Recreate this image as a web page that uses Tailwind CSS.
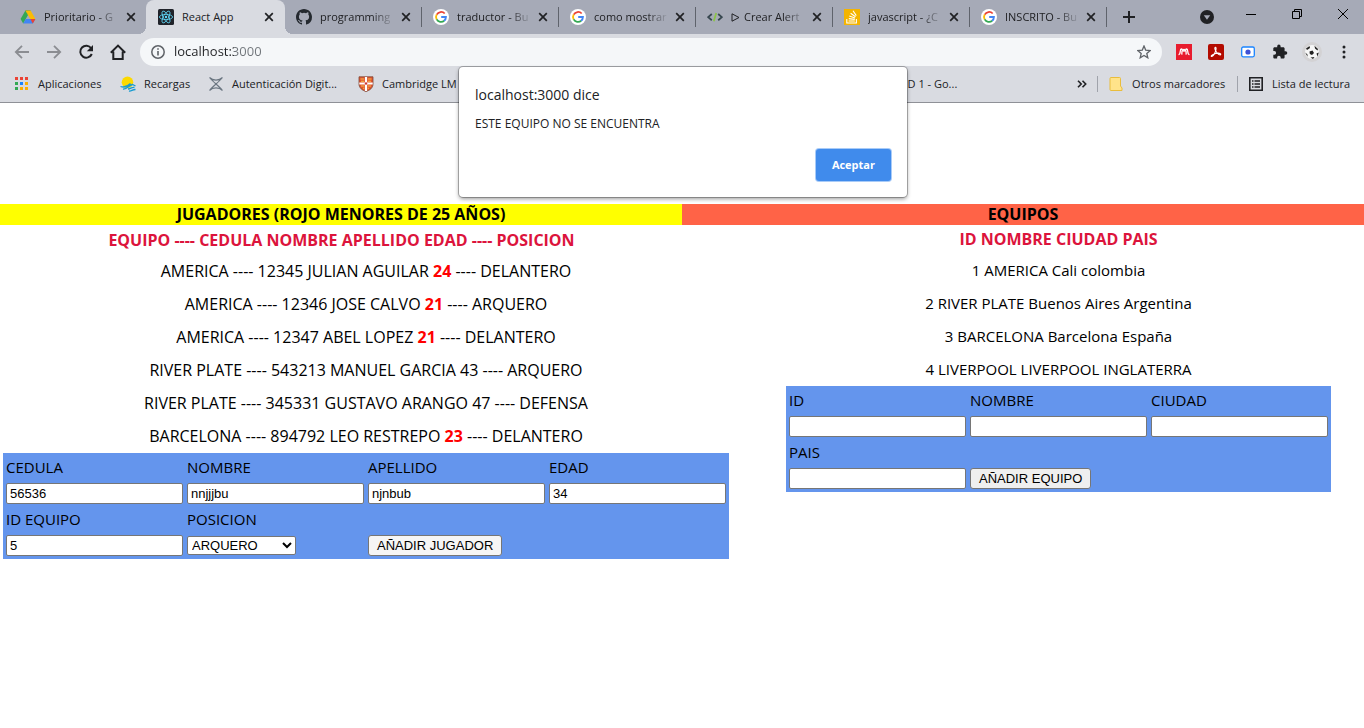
<!DOCTYPE html>
<html lang="es">
<head>
<meta charset="utf-8">
<title>React App</title>
<script src="https://cdn.jsdelivr.net/npm/@tailwindcss/browser@4"></script>
</head>
<body class="min-h-screen bg-white font-['Open_Sans','Noto_Sans',sans-serif] text-[15px] text-black">
<svg class="hidden" aria-hidden="true">
  <symbol id="google" viewBox="0 0 16 16">
    <circle cx="8" cy="8" r="8" fill="#fff"/>
    <path d="M3.7 5.6A5 5 0 0 1 11.7 4.5" fill="none" stroke="#ea4335" stroke-width="1.8"/>
    <path d="M3.7 5.5A5 5 0 0 0 3.7 10.5" fill="none" stroke="#fbbc05" stroke-width="1.8"/>
    <path d="M3.7 10.4A5 5 0 0 0 11.2 11.8" fill="none" stroke="#34a853" stroke-width="1.8"/>
    <path d="M8.2 8H12.9A5 5 0 0 1 11.1 11.8" fill="none" stroke="#4285f4" stroke-width="1.9"/>
  </symbol>
  <symbol id="close" viewBox="0 0 10 10"><path d="M1.2 1.2L8.8 8.8M8.8 1.2L1.2 8.8" stroke="#202124" stroke-width="1.7"/></symbol>
</svg>

<header class="relative text-[#202124]">
  <div class="flex h-[34px] bg-[#a6aab7] pl-[9px] text-[11px]" role="tablist">
    <div class="flex w-[137px] shrink-0 items-center pl-[11px]">
      <button role="tab" class="flex items-center gap-2">
        <svg class="size-4" viewBox="0 0 16 16"><path d="M5.4 1.5H10.6L8 6z" fill="#188038"/><path d="M5.4 1.5L.6 10 3.2 14.4 8 6z" fill="#34a853"/><path d="M10.6 1.5L15.4 10H10.3L5.4 1.5z" fill="#fbbc04"/><path d="M3.2 14.4L5.7 10H15.4L12.8 14.4z" fill="#4285f4"/><path d="M10.3 10H15.4L12.8 14.4z" fill="#ea4335"/></svg>
        <span class="w-[76px] overflow-hidden text-left whitespace-nowrap [mask-image:linear-gradient(90deg,#000_70%,transparent)]">Prioritario - G</span>
      </button>
      <button class="ml-1.5" aria-label="Cerrar"><svg class="size-2.5"><use href="#close"/></svg></button>
    </div>
    <div class="relative flex w-[139px] shrink-0 items-center rounded-t-lg bg-[#d9dbe1] pl-3">
      <span class="absolute bottom-0 -left-2 size-2 bg-[radial-gradient(circle_at_0_0,transparent_8px,#d9dbe1_8px)]"></span>
      <span class="absolute -right-2 bottom-0 size-2 bg-[radial-gradient(circle_at_100%_0,transparent_8px,#d9dbe1_8px)]"></span>
      <button role="tab" aria-selected="true" class="flex items-center gap-2">
        <svg class="size-4" viewBox="0 0 16 16"><rect width="16" height="16" rx="1.5" fill="#20232a"/><g fill="none" stroke="#61dafb" stroke-width=".8"><ellipse cx="8" cy="8" rx="6.6" ry="2.6"/><ellipse cx="8" cy="8" rx="6.6" ry="2.6" transform="rotate(60 8 8)"/><ellipse cx="8" cy="8" rx="6.6" ry="2.6" transform="rotate(120 8 8)"/></g><circle cx="8" cy="8" r="1.2" fill="#61dafb"/></svg>
        <span class="w-[76px] overflow-hidden text-left whitespace-nowrap">React App</span>
      </button>
      <button class="ml-1.5" aria-label="Cerrar"><svg class="size-2.5"><use href="#close"/></svg></button>
    </div>
    <div class="relative flex w-[137px] shrink-0 items-center pl-[11px]">
      <button role="tab" class="flex items-center gap-2">
        <svg class="size-4" viewBox="0 0 16 16"><path fill="#24292f" d="M8 0C3.58 0 0 3.58 0 8c0 3.54 2.29 6.53 5.47 7.59.4.07.55-.17.55-.38 0-.19-.01-.82-.01-1.49-2.01.37-2.53-.49-2.69-.94-.09-.23-.48-.94-.82-1.13-.28-.15-.68-.52-.01-.53.63-.01 1.08.58 1.23.82.72 1.21 1.87.87 2.33.66.07-.52.28-.87.51-1.07-1.78-.2-3.64-.89-3.64-3.95 0-.87.31-1.59.82-2.15-.08-.2-.36-1.02.08-2.12 0 0 .67-.21 2.2.82a7.6 7.6 0 0 1 4 0c1.53-1.04 2.2-.82 2.2-.82.44 1.1.16 1.92.08 2.12.51.56.82 1.27.82 2.15 0 3.07-1.87 3.75-3.65 3.95.29.25.54.73.54 1.48 0 1.07-.01 1.93-.01 2.2 0 .21.15.46.55.38A8 8 0 0 0 16 8c0-4.42-3.58-8-8-8z"/></svg>
        <span class="w-[75px] overflow-hidden text-left whitespace-nowrap [mask-image:linear-gradient(90deg,#000_70%,transparent)]">programming</span>
      </button>
      <button class="ml-1.5" aria-label="Cerrar"><svg class="size-2.5"><use href="#close"/></svg></button>
      <span class="absolute top-[7px] right-0 h-5 w-px bg-[#5f636c]"></span>
    </div>
    <div class="relative flex w-[137px] shrink-0 items-center pl-[11px]">
      <button role="tab" class="flex items-center gap-2"><svg class="size-4"><use href="#google"/></svg>
        <span class="w-[75px] overflow-hidden text-left whitespace-nowrap [mask-image:linear-gradient(90deg,#000_70%,transparent)]">traductor - Bu</span>
      </button>
      <button class="ml-1.5" aria-label="Cerrar"><svg class="size-2.5"><use href="#close"/></svg></button>
      <span class="absolute top-[7px] right-0 h-5 w-px bg-[#5f636c]"></span>
    </div>
    <div class="relative flex w-[137px] shrink-0 items-center pl-[11px]">
      <button role="tab" class="flex items-center gap-2"><svg class="size-4"><use href="#google"/></svg>
        <span class="w-[75px] overflow-hidden text-left whitespace-nowrap [mask-image:linear-gradient(90deg,#000_70%,transparent)]">como mostrar</span>
      </button>
      <button class="ml-1.5" aria-label="Cerrar"><svg class="size-2.5"><use href="#close"/></svg></button>
      <span class="absolute top-[7px] right-0 h-5 w-px bg-[#5f636c]"></span>
    </div>
    <div class="relative flex w-[137px] shrink-0 items-center pl-[11px]">
      <button role="tab" class="flex items-center gap-2">
        <svg class="size-4" viewBox="0 0 16 16" fill="none" stroke-width="1.8"><path d="M4.8 5L1.2 8.1 4.8 11.2M11.2 5L14.8 8.1 11.2 11.2" stroke="#37474f"/><path d="M9.2 4L6.8 12.2" stroke="#8bc34a"/></svg>
        <span class="w-[75px] overflow-hidden text-left whitespace-nowrap [mask-image:linear-gradient(90deg,#000_70%,transparent)]"><svg class="mr-1 inline size-[9px]" viewBox="0 0 9 9"><path d="M1 .8L8 4.5 1 8.2z" fill="none" stroke="#202124"/></svg>Crear Alert</span>
      </button>
      <button class="ml-1.5" aria-label="Cerrar"><svg class="size-2.5"><use href="#close"/></svg></button>
      <span class="absolute top-[7px] right-0 h-5 w-px bg-[#5f636c]"></span>
    </div>
    <div class="relative flex w-[137px] shrink-0 items-center pl-[11px]">
      <button role="tab" class="flex items-center gap-2">
        <svg class="size-4" viewBox="0 0 16 16"><path fill="#f4b400" d="M0 0h16v16H0z"/><path d="M2.8 10V14H12.4V10M4.6 12H10.8M4.8 9.6L10.8 10.4M5.3 7L11 9M6.6 4.2L11.5 7.7M9 1.8L12.3 6.6" fill="none" stroke="#fff" stroke-width="1.1"/></svg>
        <span class="w-[75px] overflow-hidden text-left whitespace-nowrap [mask-image:linear-gradient(90deg,#000_70%,transparent)]">javascript - ¿C</span>
      </button>
      <button class="ml-1.5" aria-label="Cerrar"><svg class="size-2.5"><use href="#close"/></svg></button>
      <span class="absolute top-[7px] right-0 h-5 w-px bg-[#5f636c]"></span>
    </div>
    <div class="relative flex w-[137px] shrink-0 items-center pl-[11px]">
      <button role="tab" class="flex items-center gap-2"><svg class="size-4"><use href="#google"/></svg>
        <span class="w-[75px] overflow-hidden text-left whitespace-nowrap [mask-image:linear-gradient(90deg,#000_70%,transparent)]">INSCRITO - Bu</span>
      </button>
      <button class="ml-1.5" aria-label="Cerrar"><svg class="size-2.5"><use href="#close"/></svg></button>
      <span class="absolute top-[7px] right-0 h-5 w-px bg-[#5f636c]"></span>
    </div>
    <button class="ml-4 shrink-0" aria-label="Nueva pestaña"><svg class="size-3" viewBox="0 0 12 12"><path d="M6 0V12M0 6H12" stroke="#202124" stroke-width="2"/></svg></button>
    <div class="ml-auto flex shrink-0 items-center">
      <button class="mr-[29px]" aria-label="Buscar pestañas"><svg class="size-3.5" viewBox="0 0 14 14"><circle cx="7" cy="7" r="7" fill="#202124"/><path d="M3.8 5.3H10.2L7 9.8z" fill="#a6aab7"/></svg></button>
      <button class="flex h-7 w-[46px] items-center self-start pl-[3px]" aria-label="Minimizar"><svg class="size-2.5" viewBox="0 0 10 10"><path d="M0 5.5H10" stroke="#000"/></svg></button>
      <button class="flex h-7 w-[46px] items-center self-start pl-[3px]" aria-label="Restaurar"><svg class="size-2.5" viewBox="0 0 10 10" fill="none" stroke="#000"><path d="M.5 2.5H7.5V9.5H.5zM2.5 2.5V.5H9.5V7.5H7.5"/></svg></button>
      <button class="flex h-7 w-[29px] items-center self-start pl-[3px]" aria-label="Cerrar ventana"><svg class="size-2.5" viewBox="0 0 10 10"><path d="M0 0L10 10M10 0L0 10" stroke="#000"/></svg></button>
    </div>
  </div>

  <div class="flex h-9 items-center bg-[#d9dbe1] pr-1 pl-1.5">
    <button class="flex w-8 justify-center" aria-label="Atrás"><svg class="size-4" viewBox="0 0 16 16" fill="none" stroke="#8b8d92" stroke-width="1.8"><path d="M15 8H2M8 1.800L1.800 8 8 14.200"/></svg></button>
    <button class="flex w-8 justify-center" aria-label="Adelante"><svg class="size-4" viewBox="0 0 16 16" fill="none" stroke="#8b8d92" stroke-width="1.8"><path d="M1 8H14M8 1.800L14.200 8 8 14.200"/></svg></button>
    <button class="flex w-8 justify-center" aria-label="Recargar"><svg class="size-4" viewBox="0 0 16 16"><path d="M13.2 4.2A6 6 0 1 0 13.8 10" fill="none" stroke="#202124" stroke-width="2"/><path d="M15 1V7.2H8.8z" fill="#202124"/></svg></button>
    <button class="flex w-8 justify-center" aria-label="Inicio"><svg class="size-4" viewBox="0 0 16 16"><path d="M.8 8.7L8 1.6 15.2 8.7M3.3 7.5V15H12.7V7.5" fill="none" stroke="#202124" stroke-width="2"/></svg></button>
    <div class="ml-1.5 flex h-7 flex-1 items-center rounded-full bg-[#f5f7f9] px-[11px]">
      <svg class="size-3.5" viewBox="0 0 14 14"><circle cx="7" cy="7" r="6.2" fill="none" stroke="#5f6368" stroke-width="1.5"/><path d="M7 6V10.5M7 3.3V4.8" stroke="#5f6368" stroke-width="1.6"/></svg>
      <input aria-label="Dirección" value="localhost:3000" class="ml-[9px] min-w-0 flex-1 bg-[linear-gradient(90deg,#202124_60px,#70757a_60px)] bg-clip-text text-[13px] text-transparent outline-none">
      <button aria-label="Añadir a marcadores"><svg class="size-3.5" viewBox="0 0 14 14"><path d="M7 1L8.7 5.1 13.2 5.5 9.8 8.4 10.8 12.8 7 10.5 3.2 12.8 4.2 8.4.8 5.5 5.3 5.1z" fill="none" stroke="#5f6368" stroke-width="1.3"/></svg></button>
    </div>
    <div class="ml-1.5 flex items-center">
      <button class="flex w-8 justify-center" aria-label="Mendeley"><svg class="size-4" viewBox="0 0 16 16"><path fill="#e81c2e" d="M0 0h16v16H0z"/><path d="M2.500 10.600C5.200 10.600 3.400 5 5.300 5 6.600 5 6.600 7.200 8 7.200S9.400 5 10.700 5C12.600 5 10.800 10.600 13.500 10.600M6 6.500L5.800 10.600M10 6.500L10.200 10.600" fill="none" stroke="#fff" stroke-width="1.300"/><circle cx="8" cy="5.800" r="1.100" fill="#fff"/></svg></button>
      <button class="flex w-8 justify-center" aria-label="Adobe Acrobat"><svg class="size-4" viewBox="0 0 16 16"><rect width="16" height="16" rx="2" fill="#b30b00"/><path d="M7.3 3.2C8.6 3 8.2 6.2 6.8 9 5.7 11.4 4 13 3.3 12.3S6 9.8 9 9.3 13 9.7 12.7 10.6 9.8 10.3 8.2 7.7 6.5 3.4 7.3 3.2z" fill="none" stroke="#fff" stroke-width="1.1"/></svg></button>
      <button class="flex w-8 justify-center" aria-label="Captura"><svg class="size-4" viewBox="0 0 16 16"><rect x="1.7" y="3" width="12.6" height="9.8" rx="1.5" fill="#fff" stroke="#1a84ff" stroke-width="1.3"/><circle cx="8" cy="8" r="2.6" fill="#3f51d5"/></svg></button>
      <button class="flex w-8 justify-center" aria-label="Extensiones"><svg class="size-4" viewBox="0 0 16 16"><path fill="#202124" d="M13.6 7.3h-1V4.6c0-.7-.6-1.3-1.3-1.3H8.6v-1a1.7 1.7 0 0 0-3.4 0v1H2.600c-.7 0-1.3.6-1.3 1.3v2.500h1a1.800 1.800 0 0 1 0 3.600h-1v2.500c0 .8.6 1.400 1.300 1.400h2.500v-1a1.800 1.800 0 0 1 3.600 0v1h2.600c.7 0 1.300-.6 1.300-1.400v-2.500h1a1.700 1.700 0 0 0 0-3.400z"/></svg></button>
      <button class="flex w-8 justify-center" aria-label="Perfil"><svg class="size-5" viewBox="0 0 20 20"><circle cx="10" cy="10" r="10" fill="#d3d2d4"/><circle cx="10" cy="10" r="7" fill="#f7f7f7"/><path d="M4 6.500L7.500 4 8 6 5 8zM12.500 3.800L16 7 15.500 8.500 13 6.500zM7.500 9.500L10.500 8.500 12 11 10 13 7.800 12zM3.200 10.500L5.500 12.500 5.500 14.800zM14.500 11.500L16.800 10.500 15.500 14.500zM8.500 15.500L12.500 15 11 17z" fill="#222"/></svg></button>
      <button class="flex w-8 justify-center" aria-label="Menú"><svg class="size-4" viewBox="0 0 16 16" fill="#202124"><circle cx="8" cy="3" r="1.5"/><circle cx="8" cy="8" r="1.5"/><circle cx="8" cy="13" r="1.5"/></svg></button>
    </div>
  </div>

  <nav class="flex h-[33px] items-center border-b border-[#8f9197] bg-[#d9dbe1] pr-3.5 pb-1 pl-3.5 text-[11px] whitespace-nowrap" aria-label="Marcadores">
    <a href="#" class="flex w-[106px] shrink-0 items-center gap-2.5"><svg class="size-3.5" viewBox="0 0 14 14"><path fill="#ea4335" d="M1 0h3v3H1zM6 0h3v3H6zM11 0h3v3h-3z"/><path fill="#34a853" d="M1 5h3v3H1zM1 10h3v3H1z"/><path fill="#1a84ff" d="M6 5h3v3H6z"/><path fill="#fbaf04" d="M11 5h3v3h-3zM6 10h3v3H6zM11 10h3v3h-3z"/></svg>Aplicaciones</a>
    <a href="#" class="flex w-[88px] shrink-0 items-center gap-2"><svg class="size-4" viewBox="0 0 16 16"><circle cx="7.500" cy="6.300" r="5.800" fill="#fcd900"/><path d="M.5 10.500C5 12 8 10 10.500 7.500M3 13C7.500 13.500 8.500 9.500 12.500 8.500L15.500 10M8 13C11 13 11 11 14.500 11.500M9 15C11.500 15.500 12 13.500 15.500 13.500" fill="none" stroke="#189bd0" stroke-width="1.300"/></svg>Recargas</a>
    <a href="#" class="flex w-[150px] shrink-0 items-center gap-2"><svg class="size-4" viewBox="0 0 16 16" fill="none" stroke="#6b7681"><path d="M1.500 1.500C5 6 11 10 14.500 14.500M14.500 1.500C11 6 5 10 1.500 14.500M1.500 1.500C5 5 11 5 14.500 1.500M1.500 14.500C5 11 11 11 14.500 14.500" stroke-width="1.100"/></svg>Autenticación Digit...</a>
    <a href="#" class="flex shrink-0 items-center gap-2"><svg class="size-4" viewBox="0 0 16 16"><path d="M1 .8H15V8C15 12 11.500 14.500 8 15.500 4.500 14.500 1 12 1 8z" fill="#e0532e" stroke="#7a4a3a" stroke-width=".8"/><path d="M8 1V15M1.300 7.500H14.700" stroke="#fff" stroke-width="2.200"/><path d="M2.500 3H6M3 5.300H6M10 3H13.500M10 5.300H13M3 10H6.300M5 12.300H6.300M9.700 10H13M9.700 12.300H11" stroke="#f5c04a" stroke-width="1.100"/><circle cx="8" cy="7.500" r="1.200" fill="#c33"/></svg>Cambridge LM</a>
    <a href="#" class="mr-auto ml-[451px] shrink-0">D 1 - Go...</a>
    <button class="mr-2.5" aria-label="Más marcadores"><svg class="size-2.5" viewBox="0 0 10 10"><path d="M1 1.800L4.200 5 1 8.200M5.500 1.800L8.700 5 5.500 8.200" fill="none" stroke="#202124" stroke-width="1.600"/></svg></button>
    <span class="h-4 w-px bg-[#a0a3ab]"></span>
    <a href="#" class="ml-2.5 flex w-[129px] items-center gap-2"><svg class="size-4" viewBox="0 0 16 16"><path d="M2 2.500Q2 1.500 3 1.500H11.500Q12.500 1.500 12.500 2.500V10L14 12V14.500H3Q2 14.500 2 13.500z" fill="#ffe38a" stroke="#e9bd3d"/></svg>Otros marcadores</a>
    <span class="h-4 w-px bg-[#a0a3ab]"></span>
    <a href="#" class="ml-2.5 flex items-center gap-2"><svg class="size-4" viewBox="0 0 16 16" fill="none" stroke="#202124"><path d="M1.800 1.800H14.200V14.200H1.800z" stroke-width="1.600"/><path d="M6.500 5H12M6.500 8H12M6.500 11H12M4 5H5.500M4 8H5.500M4 11H5.500" stroke-width="1.300"/></svg>Lista de lectura</a>
  </nav>

  <div role="dialog" aria-labelledby="dlg-title" class="absolute top-[67px] left-1/2 z-10 -ml-[223px] flex h-[130px] w-[448px] flex-col rounded bg-white p-4 shadow-[0_0_0_1px_rgba(0,0,0,0.25),0_2px_4px_rgba(0,0,0,0.4)]">
    <h1 id="dlg-title" class="text-sm leading-6">localhost:3000 dice</h1>
    <p class="mt-[7px] text-xs leading-5">ESTE EQUIPO NO SE ENCUENTRA</p>
    <button class="mt-auto self-end rounded-[3px] bg-[#408bec] px-4 text-[11px] leading-8 font-bold text-white ring-1 ring-[#a8cbf8]">Aceptar</button>
  </div>
</header>

<main class="pt-[101px] text-center">
  <div class="grid grid-cols-2 text-base leading-[21px] font-bold">
    <h2 class="bg-[#ffff00]">JUGADORES (ROJO MENORES DE 25 AÑOS)</h2>
    <h2 class="bg-[#ff6347]">EQUIPOS</h2>
  </div>
  <div class="flex items-start">
    <section class="w-[732px] shrink-0">
      <h3 class="w-[683px] text-base leading-[30px] font-bold text-[#dc143c]">EQUIPO ---- CEDULA NOMBRE APELLIDO EDAD ---- POSICION</h3>
      <ul class="text-base leading-[33px]">
        <li>AMERICA ---- 12345 JULIAN AGUILAR <b class="text-[#ff0000]">24</b> ---- DELANTERO</li>
        <li>AMERICA ---- 12346 JOSE CALVO <b class="text-[#ff0000]">21</b> ---- ARQUERO</li>
        <li>AMERICA ---- 12347 ABEL LOPEZ <b class="text-[#ff0000]">21</b> ---- DELANTERO</li>
        <li>RIVER PLATE ---- 543213 MANUEL GARCIA 43 ---- ARQUERO</li>
        <li>RIVER PLATE ---- 345331 GUSTAVO ARANGO 47 ---- DEFENSA</li>
        <li>BARCELONA ---- 894792 LEO RESTREPO <b class="text-[#ff0000]">23</b> ---- DELANTERO</li>
      </ul>
      <form class="mx-auto grid w-fit grid-cols-[repeat(4,177px)] gap-1 bg-[#6495ed] p-[3px] text-left">
        <div class="flex flex-col gap-[5px]"><label for="cedula" class="leading-[22px]">CEDULA</label><input id="cedula" value="56536" class="h-[21px] rounded-xs border border-[#767676] bg-white px-[3px] font-['Liberation_Sans',sans-serif] text-[13px]"></div>
        <div class="flex flex-col gap-[5px]"><label for="nombre" class="leading-[22px]">NOMBRE</label><input id="nombre" value="nnjjjbu" class="h-[21px] rounded-xs border border-[#767676] bg-white px-[3px] font-['Liberation_Sans',sans-serif] text-[13px]"></div>
        <div class="flex flex-col gap-[5px]"><label for="apellido" class="leading-[22px]">APELLIDO</label><input id="apellido" value="njnbub" class="h-[21px] rounded-xs border border-[#767676] bg-white px-[3px] font-['Liberation_Sans',sans-serif] text-[13px]"></div>
        <div class="flex flex-col gap-[5px]"><label for="edad" class="leading-[22px]">EDAD</label><input id="edad" value="34" class="h-[21px] rounded-xs border border-[#767676] bg-white px-[3px] font-['Liberation_Sans',sans-serif] text-[13px]"></div>
        <div class="flex flex-col gap-[5px]"><label for="idequipo" class="leading-[22px]">ID EQUIPO</label><input id="idequipo" value="5" class="h-[21px] rounded-xs border border-[#767676] bg-white px-[3px] font-['Liberation_Sans',sans-serif] text-[13px]"></div>
        <div class="flex flex-col gap-1.5"><label for="posicion" class="leading-[22px]">POSICION</label><select id="posicion" class="h-[19px] w-[109px] rounded-xs border border-[#767676] bg-white font-['Liberation_Sans',sans-serif] text-[13px]"><option>ARQUERO</option><option>DEFENSA</option><option>DELANTERO</option></select></div>
        <button type="button" class="h-[21px] self-end justify-self-start rounded-[3px] border border-[#767676] bg-[#f5f5f5] px-2 font-['Liberation_Sans',sans-serif] text-[13px] leading-none">AÑADIR JUGADOR</button>
      </form>
    </section>
    <section class="ml-[21px] flex-1">
      <h3 class="text-base leading-[29px] font-bold text-[#dc143c]">ID NOMBRE CIUDAD PAIS</h3>
      <ul class="leading-[33px]">
        <li>1 AMERICA Cali colombia</li>
        <li>2 RIVER PLATE Buenos Aires Argentina</li>
        <li>3 BARCELONA Barcelona España</li>
        <li>4 LIVERPOOL LIVERPOOL INGLATERRA</li>
      </ul>
      <form class="mx-auto grid w-fit grid-cols-[repeat(3,177px)] gap-1 bg-[#6495ed] p-[3px] text-left">
        <div class="flex flex-col gap-[5px]"><label for="eid" class="leading-[22px]">ID</label><input id="eid" class="h-[21px] rounded-xs border border-[#767676] bg-white px-[3px] font-['Liberation_Sans',sans-serif] text-[13px]"></div>
        <div class="flex flex-col gap-[5px]"><label for="enombre" class="leading-[22px]">NOMBRE</label><input id="enombre" class="h-[21px] rounded-xs border border-[#767676] bg-white px-[3px] font-['Liberation_Sans',sans-serif] text-[13px]"></div>
        <div class="flex flex-col gap-[5px]"><label for="ciudad" class="leading-[22px]">CIUDAD</label><input id="ciudad" class="h-[21px] rounded-xs border border-[#767676] bg-white px-[3px] font-['Liberation_Sans',sans-serif] text-[13px]"></div>
        <div class="flex flex-col gap-[5px]"><label for="pais" class="leading-[22px]">PAIS</label><input id="pais" class="h-[21px] rounded-xs border border-[#767676] bg-white px-[3px] font-['Liberation_Sans',sans-serif] text-[13px]"></div>
        <button type="button" class="h-[21px] self-end justify-self-start rounded-[3px] border border-[#767676] bg-[#efefef] px-2 font-['Liberation_Sans',sans-serif] text-[13px] leading-none">AÑADIR EQUIPO</button>
      </form>
    </section>
  </div>
</main>
</body>
</html>
